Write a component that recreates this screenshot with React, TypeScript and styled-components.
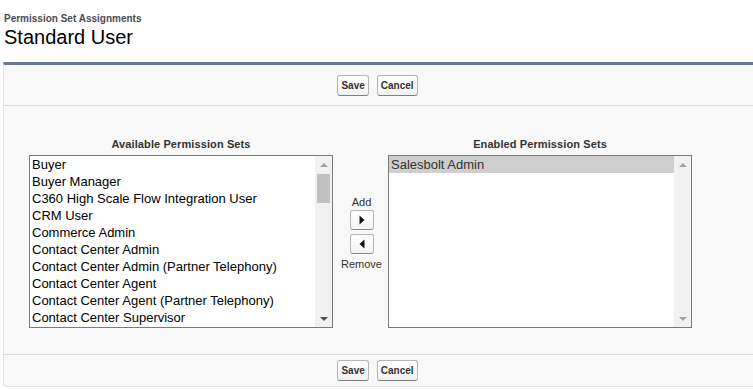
import React from "react";
import styled, { createGlobalStyle } from "styled-components";

const Global = createGlobalStyle`
  html, body { margin: 0; padding: 0; background: #fff; overflow: hidden; }
  body { font-family: Arial, "Liberation Sans", sans-serif; color: #000; }
`;

const Page = styled.div`
  width: 753px;
  height: 389px;
`;

const Header = styled.div`
  padding: 13px 0 0 4px;
  height: 49px;
  box-sizing: border-box;
`;

const Kicker = styled.div`
  font-size: 10px;
  font-weight: bold;
  color: #4a4a56;
  line-height: 12px;
`;

const Title = styled.h1`
  margin: 0;
  font-size: 20px;
  font-weight: normal;
  color: #000;
  line-height: 24px;
`;

const Panel = styled.div`
  margin-left: 3px;
  margin-top: 13px;
  border-top: 3px solid #6a7592;
  border-left: 1px solid #e3e3e3;
  border-bottom: 1px solid #e3e3e3;
  border-bottom-left-radius: 4px;
  background: #f8f8f8;
`;

const ButtonBar = styled.div<{ $bottom?: boolean }>`
  display: flex;
  justify-content: center;
  gap: 8px;
  padding-right: 2px;
  height: ${(p) => (p.$bottom ? "32px" : "41px")};
  align-items: center;
  box-sizing: border-box;
  border-bottom: ${(p) => (p.$bottom ? "none" : "1px solid #dbdbdb")};
  border-top: ${(p) => (p.$bottom ? "1px solid #dbdbdb" : "none")};
`;

const Btn = styled.button`
  font-family: Arial, "Liberation Sans", sans-serif;
  font-size: 10px;
  font-weight: bold;
  color: #333;
  height: 21px;
  padding: 0 3px;
  border: 1px solid #b5b5b5;
  border-bottom-color: #7f7f7f;
  border-radius: 3px;
  background: linear-gradient(#ffffff, #f2f2f2);
  cursor: pointer;
`;

const Body = styled.div`
  display: grid;
  grid-template-columns: 304px 55px 304px;
  grid-template-rows: 15px 173px;
  row-gap: 3px;
  padding: 31px 0 26px 25px;
`;

const ColLabel = styled.div`
  font-size: 11px;
  font-weight: bold;
  color: #333;
  text-align: center;
  line-height: 15px;
  letter-spacing: 0.1px;
`;

const Mover = styled.div`
  grid-row: 2;
  grid-column: 2;
  display: flex;
  flex-direction: column;
  align-items: center;
  padding-top: 41px;
  font-size: 11px;
  color: #333;
`;

const MoveLabel = styled.div`
  line-height: 13px;
  margin: 0 0 1px 2px;
`;

const ArrowBtn = styled.button`
  width: 24px;
  height: 20px;
  margin: 0 0 4px 2px;
  padding: 0;
  display: flex;
  align-items: center;
  justify-content: center;
  border: 1px solid #b5b5b5;
  border-bottom-color: #8a8a8a;
  border-radius: 3px;
  background: linear-gradient(#ffffff, #f2f2f2);
`;

const ListBox = styled.div<{ $col: number }>`
  grid-row: 2;
  grid-column: ${(p) => p.$col};
  border: 1px solid #7a7a7a;
  background: #fff;
  display: flex;
  overflow: hidden;
`;

const Items = styled.div`
  flex: 1;
  min-width: 0;
`;

const Item = styled.div<{ $selected?: boolean }>`
  height: 17px;
  line-height: 17px;
  font-size: 13px;
  padding-left: 2px;
  white-space: nowrap;
  color: ${(p) => (p.$selected ? "#333" : "#000")};
  background: ${(p) => (p.$selected ? "#cecece" : "transparent")};
`;

const Scrollbar = styled.div`
  width: 17px;
  background: #f1f1f1;
  display: flex;
  flex-direction: column;
  align-items: center;
`;

const ScrollArrow = styled.div<{ $up?: boolean; $dim?: boolean }>`
  height: 17px;
  width: 17px;
  display: flex;
  align-items: center;
  justify-content: center;
  &::after {
    content: "";
    width: 0;
    height: 0;
    border-left: 4px solid transparent;
    border-right: 4px solid transparent;
    ${(p) =>
      p.$up
        ? `border-bottom: 4px solid ${p.$dim ? "#a3a3a3" : "#505050"};`
        : `border-top: 4px solid ${p.$dim ? "#a3a3a3" : "#505050"};`}
  }
`;

const Track = styled.div`
  flex: 1;
  width: 100%;
  display: flex;
  justify-content: center;
`;

const Thumb = styled.div`
  width: 13px;
  height: 29px;
  margin-top: 1px;
  background: #c1c1c1;
`;

const available = [
  "Buyer",
  "Buyer Manager",
  "C360 High Scale Flow Integration User",
  "CRM User",
  "Commerce Admin",
  "Contact Center Admin",
  "Contact Center Admin (Partner Telephony)",
  "Contact Center Agent",
  "Contact Center Agent (Partner Telephony)",
  "Contact Center Supervisor",
];

const Tri = ({ dir }: { dir: "left" | "right" }) => (
  <svg width="6" height="10" viewBox="0 0 6 10">
    {dir === "right" ? (
      <path d="M0.5 0.5 L5.5 5 L0.5 9.5 Z" fill="#111" />
    ) : (
      <path d="M5.5 0.5 L0.5 5 L5.5 9.5 Z" fill="#111" />
    )}
  </svg>
);

export default function App() {
  return (
    <Page>
      <Global />
      <Header>
        <Kicker>Permission Set Assignments</Kicker>
        <Title>Standard User</Title>
      </Header>
      <Panel>
        <ButtonBar>
          <Btn>Save</Btn>
          <Btn>Cancel</Btn>
        </ButtonBar>
        <Body>
          <ColLabel>Available Permission Sets</ColLabel>
          <div />
          <ColLabel>Enabled Permission Sets</ColLabel>
          <ListBox $col={1}>
            <Items>
              {available.map((a) => (
                <Item key={a}>{a}</Item>
              ))}
            </Items>
            <Scrollbar>
              <ScrollArrow $up $dim />
              <Track>
                <Thumb />
              </Track>
              <ScrollArrow />
            </Scrollbar>
          </ListBox>
          <Mover>
            <MoveLabel>Add</MoveLabel>
            <ArrowBtn aria-label="Add">
              <Tri dir="right" />
            </ArrowBtn>
            <ArrowBtn aria-label="Remove">
              <Tri dir="left" />
            </ArrowBtn>
            <MoveLabel>Remove</MoveLabel>
          </Mover>
          <ListBox $col={3}>
            <Items>
              <Item $selected>Salesbolt Admin</Item>
            </Items>
            <Scrollbar>
              <ScrollArrow $up $dim />
              <Track />
              <ScrollArrow $dim />
            </Scrollbar>
          </ListBox>
        </Body>
        <ButtonBar $bottom>
          <Btn>Save</Btn>
          <Btn>Cancel</Btn>
        </ButtonBar>
      </Panel>
    </Page>
  );
}
